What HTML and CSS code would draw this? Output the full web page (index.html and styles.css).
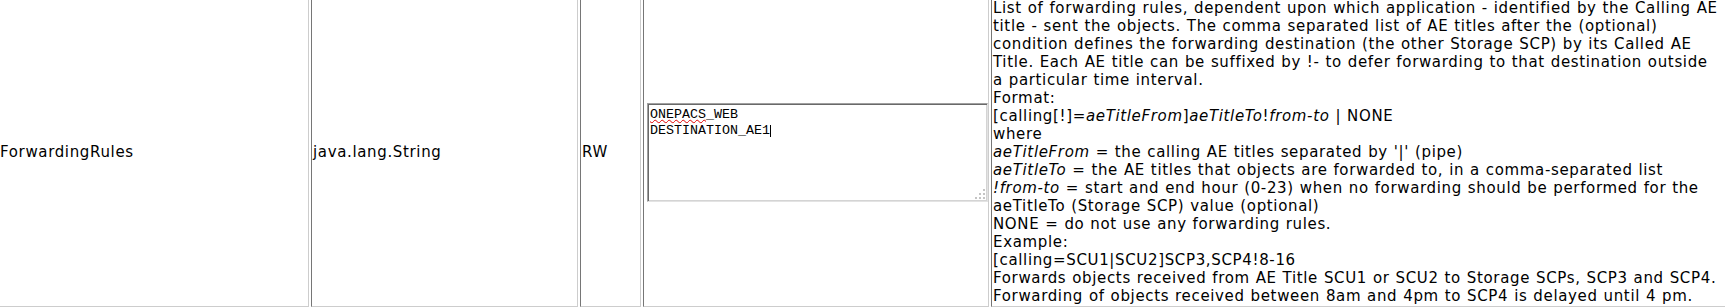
FILE: index.html
```html
<!DOCTYPE html>
<html lang="en">
<head>
<meta charset="utf-8">
<title>ForwardingRules</title>
<link rel="stylesheet" href="styles.css">
</head>
<body>
<table class="attrs">
  <tr>
    <td class="c-name">ForwardingRules</td>
    <td class="c-type">java.lang.String</td>
    <td class="c-access">RW</td>
    <td class="c-value">
      <div class="field" role="textbox" aria-multiline="true"><span class="misspelled">ONEPACS</span>_WEB
DESTINATION_AE1<span class="caret"></span><svg class="grip" width="12" height="12" viewBox="0 0 12 12" aria-hidden="true"><rect x="9" y="1" width="2" height="2"/><rect x="5" y="5" width="2" height="2"/><rect x="9" y="5" width="2" height="2"/><rect x="1" y="9" width="2" height="2"/><rect x="5" y="9" width="2" height="2"/><rect x="9" y="9" width="2" height="2"/></svg></div>
    </td>
    <td class="c-desc">List of forwarding rules, dependent upon which application - identified by the Calling AE<br>title - sent the objects. The comma separated list of AE titles after the (optional)<br>condition defines the forwarding destination (the other Storage SCP) by its Called AE<br>Title. Each AE title can be suffixed by !- to defer forwarding to that destination outside<br>a particular time interval.<br>Format:<br>[calling[!]=<i>aeTitleFrom</i>]<i>aeTitleTo</i>!<i>from-to</i> | NONE<br>where<br><i>aeTitleFrom</i> = the calling AE titles separated by '|' (pipe)<br><i>aeTitleTo</i> = the AE titles that objects are forwarded to, in a comma-separated list<br><i>!from-to</i> = start and end hour (0-23) when no forwarding should be performed for the<br>aeTitleTo (Storage SCP) value (optional)<br>NONE = do not use any forwarding rules.<br>Example:<br>[calling=SCU1|SCU2]SCP3,SCP4!8-16<br>Forwards objects received from AE Title SCU1 or SCU2 to Storage SCPs, SCP3 and SCP4.<br>Forwarding of objects received between 8am and 4pm to SCP4 is delayed until 4 pm.</td>
  </tr>
</table>
</body>
</html>
```
FILE: styles.css
```css
html, body {
  margin: 0;
  padding: 0;
  overflow: hidden;
  background: #fff;
}

body {
  font-family: "DejaVu Sans", Verdana, sans-serif;
  font-size: 15px;
  line-height: 18px;
  letter-spacing: 0.65px;
  word-spacing: 0.5px;
  color: #000;
}

.attrs {
  border-collapse: separate;
  border-spacing: 2px;
  border: 1px solid;
  border-color: #dcdcdc #777 #777 #dcdcdc;
  margin: -6px 0 0 -5px;
  table-layout: fixed;
  width: 1744px;
}

.attrs td {
  box-sizing: border-box;
  border: 1px solid;
  border-color: #767676 #cdcdcd #cdcdcd #767676;
  padding: 1px;
  vertical-align: middle;
  white-space: nowrap;
  overflow: hidden;
}

.c-name { width: 311px; }
.c-type { width: 267px; }
.c-access { width: 61px; }
.c-value { width: 346px; }
.c-desc { width: 745px; }

.c-desc i {
  font-style: italic;
}

.field {
  position: relative;
  box-sizing: border-box;
  width: 341px;
  height: 99px;
  margin-left: 2px;
  padding: 3px 2px 2px;
  border: 1px solid;
  border-color: #a0a0a0 #e3e3e3 #e3e3e3 #a0a0a0;
  box-shadow: inset 1px 1px 0 #696969, inset -1px -1px 0 #d4d4d4;
  font-family: "Liberation Mono", "Courier New", monospace;
  font-size: 13.33px;
  line-height: 16px;
  letter-spacing: 0;
  word-spacing: 0;
  white-space: pre;
  color: #000;
  background: #fff;
}

.misspelled {
  text-decoration: underline wavy #e00000;
  text-decoration-thickness: 1px;
  text-underline-offset: 1px;
}

.caret {
  display: inline-block;
  width: 1px;
  height: 12px;
  background: #000;
  vertical-align: -3px;
}

.grip {
  position: absolute;
  right: 1px;
  bottom: 1px;
  fill: #c4c4c4;
}
```
